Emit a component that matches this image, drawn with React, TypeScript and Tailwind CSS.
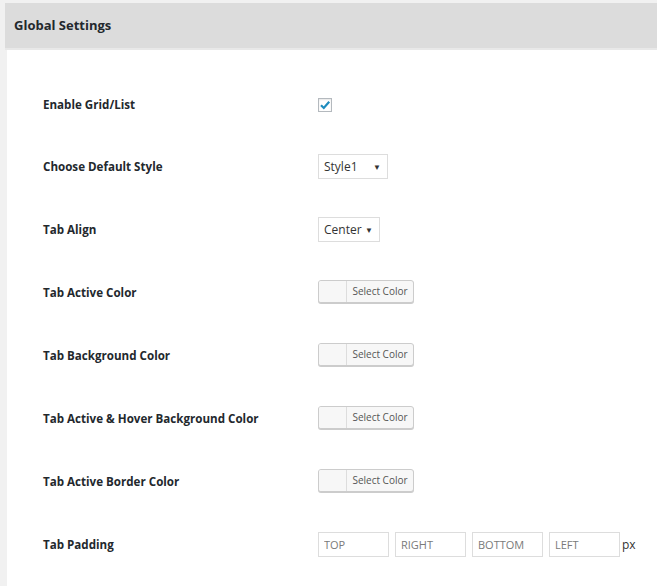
import { useState } from 'react';

const colorRows = [
  'Tab Active Color',
  'Tab Background Color',
  'Tab Active & Hover Background Color',
  'Tab Active Border Color',
];

const ColorButton = () => (
  <button className="-mt-[2px] flex h-[23px] w-[96px] items-stretch overflow-hidden rounded-[3px] border border-[#cccccc] bg-[#f7f7f7] shadow-[0_1px_0_#cccccc]">
    <span className="w-[28px] border-r border-[#dddddd] bg-[#f7f7f7]" />
    <span className="flex flex-1 items-center justify-center text-[10px] text-[#555555]">Select Color</span>
  </button>
);

const Row = ({ label, short, children }: { label: string; short?: boolean; children: React.ReactNode }) => (
  <div className={short ? 'flex h-[60px] items-center' : 'flex h-[63px] items-center'}>
    <div className="w-[275px] text-[11.6px] font-bold text-[#23282d]">{label}</div>
    <div className="flex items-center">{children}</div>
  </div>
);

export default function App() {
  const [gridList, setGridList] = useState(true);

  return (
    <div className="min-h-[586px] bg-[#f1f1f1] pt-[3px] font-['Open_Sans',sans-serif]">
      <div className="ml-[5px] flex h-[45px] items-center bg-[#dcdcdc] px-[9px] text-[13px] font-bold text-[#23282d]">
        Global Settings
      </div>
      <div className="ml-[5px] h-[2px] bg-[#e8e8e8]" />
      <div className="ml-[7px] bg-white pb-[12px] pl-[36px] pt-[25px]">
        <Row label="Enable Grid/List" short>
          <button
            onClick={() => setGridList(!gridList)}
            className="-mt-[1px] flex h-[14px] w-[14px] items-center justify-center border border-[#b4b9be] bg-white shadow-[inset_0_1px_2px_rgba(0,0,0,0.1)]"
          >
            {gridList && (
              <svg width="12" height="12" viewBox="0 0 12 12">
                <path d="M2 6.2 L4.8 9 L10.2 2.8" fill="none" stroke="#1e8cbe" strokeWidth="2.2" />
              </svg>
            )}
          </button>
        </Row>
        <Row label="Choose Default Style">
          <div className="flex h-[25px] w-[70px] items-center justify-between border border-[#dddddd] pl-[5px] pr-[6px] text-[12px] text-[#333333]">
            <span>Style1</span>
            <span className="text-[8px]">▼</span>
          </div>
        </Row>
        <Row label="Tab Align">
          <div className="flex h-[25px] w-[62px] items-center justify-between border border-[#dddddd] pl-[5px] pr-[6px] text-[12px] text-[#333333]">
            <span>Center</span>
            <span className="text-[8px]">▼</span>
          </div>
        </Row>
        {colorRows.map((label) => (
          <Row key={label} label={label}>
            <ColorButton />
          </Row>
        ))}
        <Row label="Tab Padding">
          <div className="flex items-center gap-[6px]">
            {['TOP', 'RIGHT', 'BOTTOM', 'LEFT'].map((p) => (
              <input
                key={p}
                placeholder={p}
                className="h-[25px] w-[71px] border border-[#dddddd] px-[5px] text-[11px] text-[#333333] outline-none placeholder:text-[#7a7a7a]"
              />
            ))}
            <span className="-ml-[4px] text-[12px] text-[#333333]">px</span>
          </div>
        </Row>
      </div>
    </div>
  );
}
